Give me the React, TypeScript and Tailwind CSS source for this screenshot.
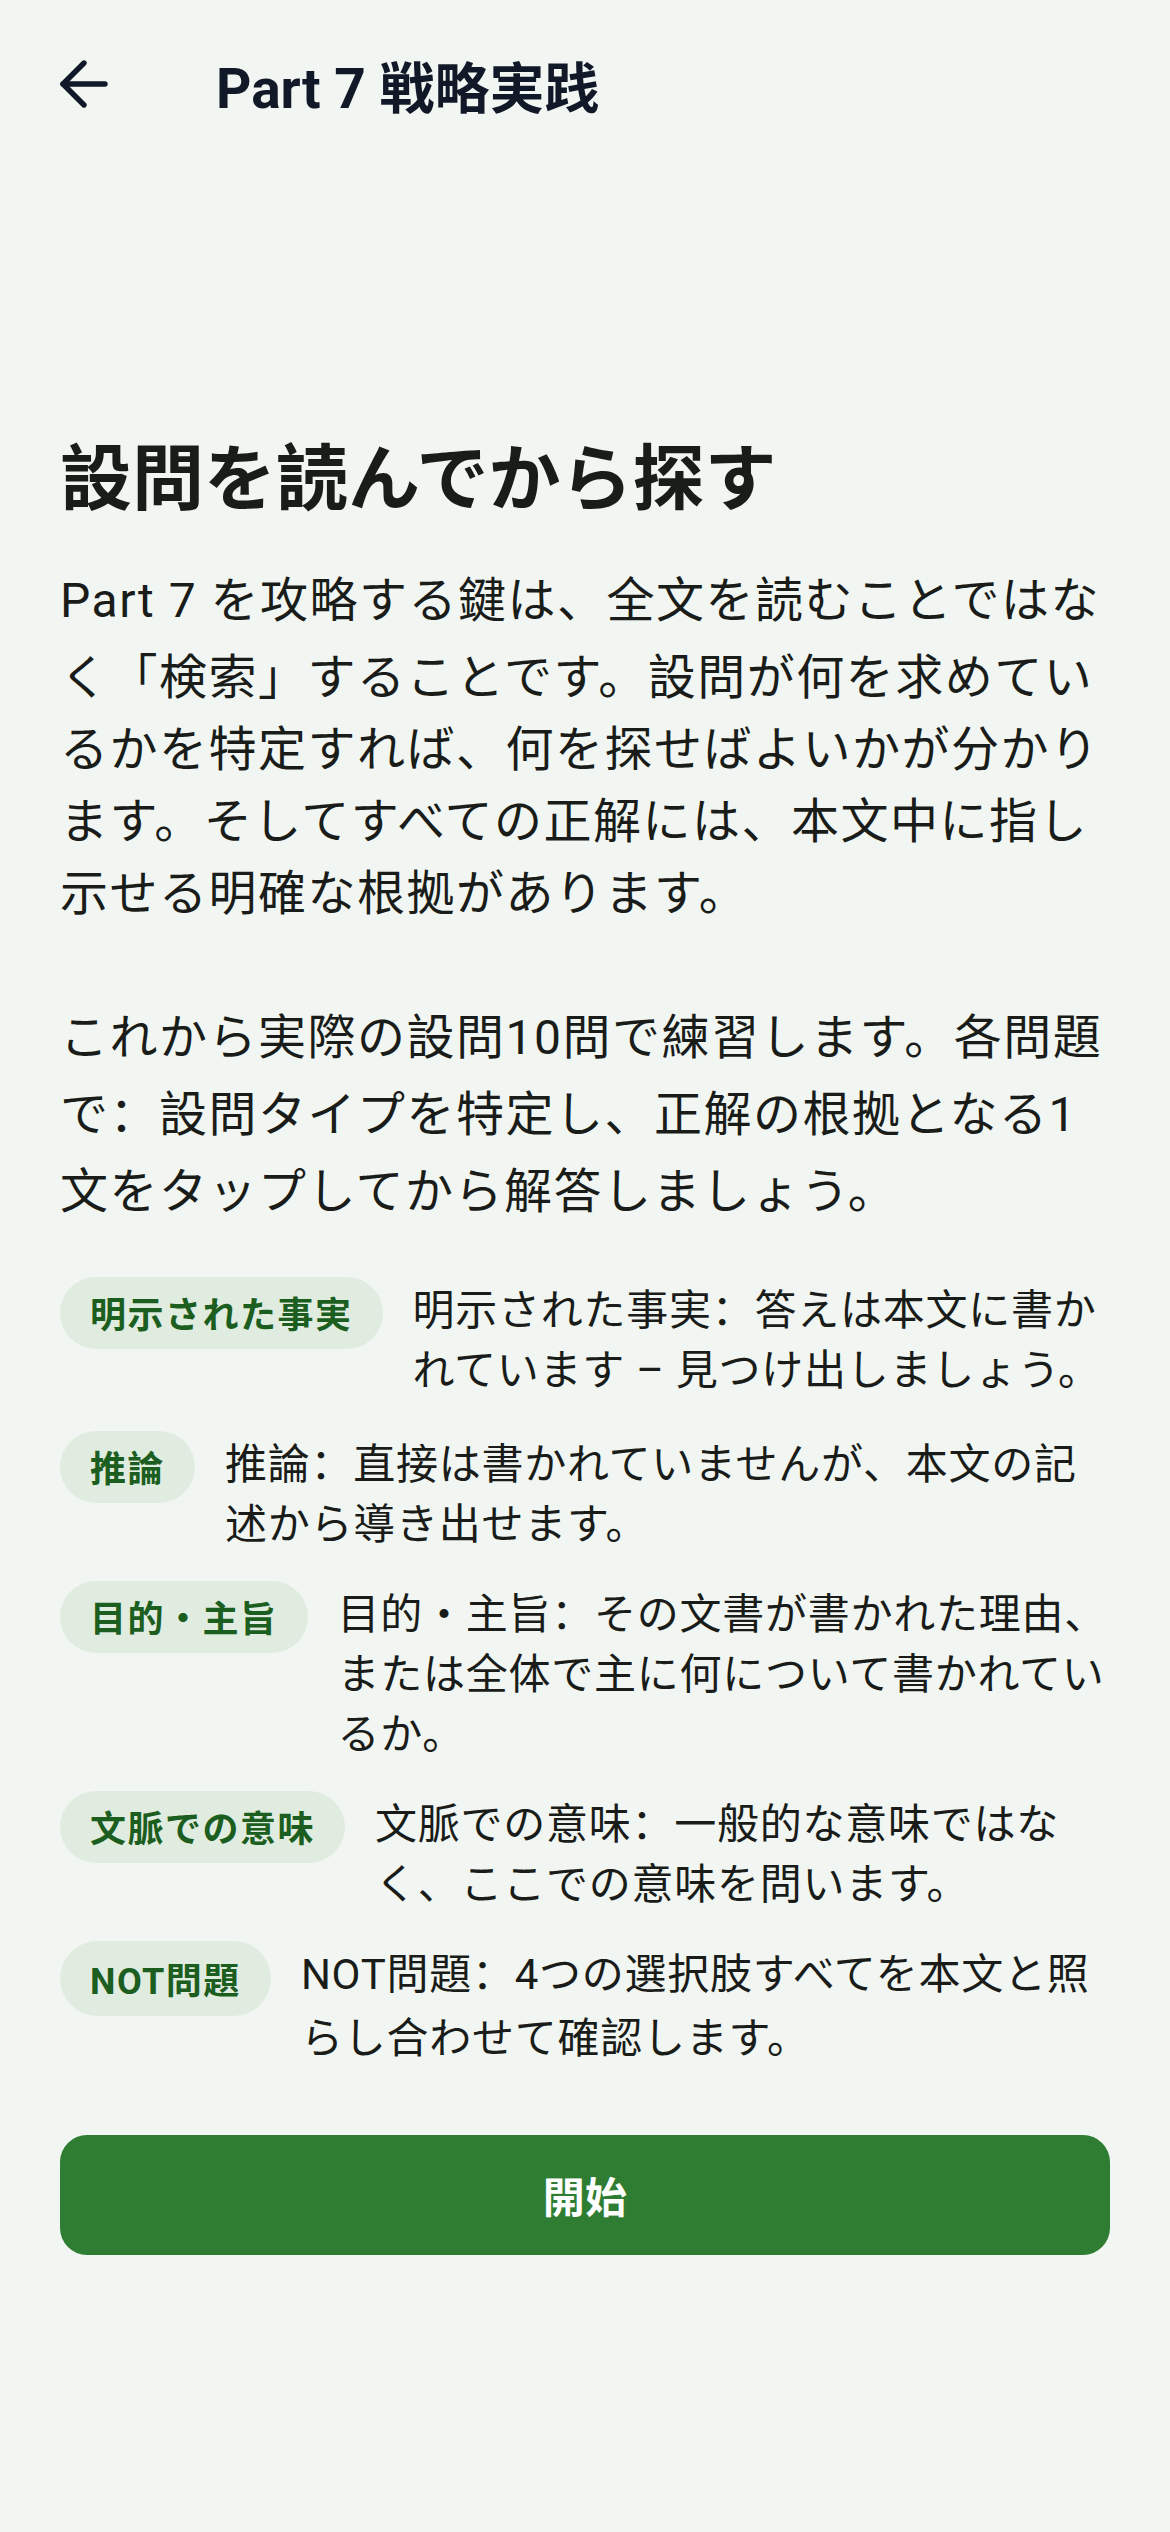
import React from "react";

type Line = { t: string; latin?: boolean };

const para: Line[] = [
  { t: "Part 7 を攻略する鍵は、全文を読むことではな", latin: true },
  { t: "く「検索」することです。設問が何を求めてい" },
  { t: "るかを特定すれば、何を探せばよいかが分かり" },
  { t: "ます。そしてすべての正解には、本文中に指し" },
  { t: "示せる明確な根拠があります。" },
  { t: "" },
  { t: "これから実際の設問10問で練習します。各問題", latin: true },
  { t: "で：設問タイプを特定し、正解の根拠となる1", latin: true },
  { t: "文をタップしてから解答しましょう。" },
];

type Row = { label: string; latinLabel?: boolean; lines: Line[] };

const rows: Row[] = [
  {
    label: "明示された事実",
    lines: [
      { t: "明示された事実：答えは本文に書か" },
      { t: "れています – 見つけ出しましょう。", latin: true },
    ],
  },
  {
    label: "推論",
    lines: [
      { t: "推論：直接は書かれていませんが、本文の記" },
      { t: "述から導き出せます。" },
    ],
  },
  {
    label: "目的・主旨",
    lines: [
      { t: "目的・主旨：その文書が書かれた理由、" },
      { t: "または全体で主に何について書かれてい" },
      { t: "るか。" },
    ],
  },
  {
    label: "文脈での意味",
    lines: [
      { t: "文脈での意味：一般的な意味ではな" },
      { t: "く、ここでの意味を問います。" },
    ],
  },
  {
    label: "NOT問題",
    latinLabel: true,
    lines: [
      { t: "NOT問題：4つの選択肢すべてを本文と照", latin: true },
      { t: "らし合わせて確認します。" },
    ],
  },
];

function ArrowBack() {
  return (
    <svg
      width="72"
      height="72"
      viewBox="0 0 24 24"
      fill="none"
      stroke="#111827"
      strokeWidth="1.8"
      strokeLinecap="round"
      strokeLinejoin="round"
    >
      <path d="M19 12H5" />
      <path d="M12 19l-7-7 7-7" />
    </svg>
  );
}

export default function App() {
  return (
    <div className="min-h-[2532px] w-full bg-[#f1f6f2] font-['Roboto','Noto_Sans_CJK_SC',sans-serif] text-[#1a1c19]">
      <header className="flex h-[168px] items-center">
        <div className="ml-[48px] flex h-[72px] w-[72px] shrink-0 items-center justify-center">
          <ArrowBack />
        </div>
        <h1 className="ml-[96px] pt-[10px] text-[55px] font-bold leading-none text-[#111827]">
          Part 7 戦略実践
        </h1>
      </header>

      <main className="px-[60px] pt-[269px]">
        <h2 className="text-[72px] font-bold leading-[86px] text-[#1a1c19]">
          設問を読んでから探す
        </h2>

        <div className="mt-[42px] text-[48px] leading-[72px] tracking-[1.5px]">
          {para.map((l, i) =>
            l.latin ? (
              <div key={i} className="h-[77px] whitespace-nowrap">
                {l.t}
              </div>
            ) : (
              <div key={i} className="h-[72px] whitespace-nowrap">
                {l.t}
              </div>
            )
          )}
        </div>

        <div className="mt-[49px] flex flex-col gap-[26px]">
          {rows.map((r, i) => (
            <div key={i} className="flex items-start gap-[30px]">
              <span
                className={
                  r.latinLabel
                    ? "flex h-[75px] shrink-0 items-center rounded-full bg-[#e1ece1] px-[30px] pt-[6px] text-[36px] font-bold leading-[48px] tracking-[1.5px] text-[#1b5e20]"
                    : "flex h-[72px] shrink-0 items-center rounded-full bg-[#e1ece1] px-[30px] pt-[6px] text-[36px] font-bold leading-[48px] tracking-[1.5px] text-[#1b5e20]"
                }
              >
                {r.label}
              </span>
              <div className="flex-1 pt-[4px] text-[42px] leading-[60px] tracking-[0.75px]">
                {r.lines.map((l, j) =>
                  l.latin ? (
                    <div key={j} className="h-[64px] whitespace-nowrap">
                      {l.t}
                    </div>
                  ) : (
                    <div key={j} className="h-[60px] whitespace-nowrap">
                      {l.t}
                    </div>
                  )
                )}
              </div>
            </div>
          ))}
        </div>

        <button className="mt-[66px] flex h-[120px] w-full items-center justify-center rounded-[27px] bg-[#2e7d32] pt-[8px] text-[42px] font-bold leading-[56px] tracking-[0.3px] text-white">
          開始
        </button>
      </main>
    </div>
  );
}
